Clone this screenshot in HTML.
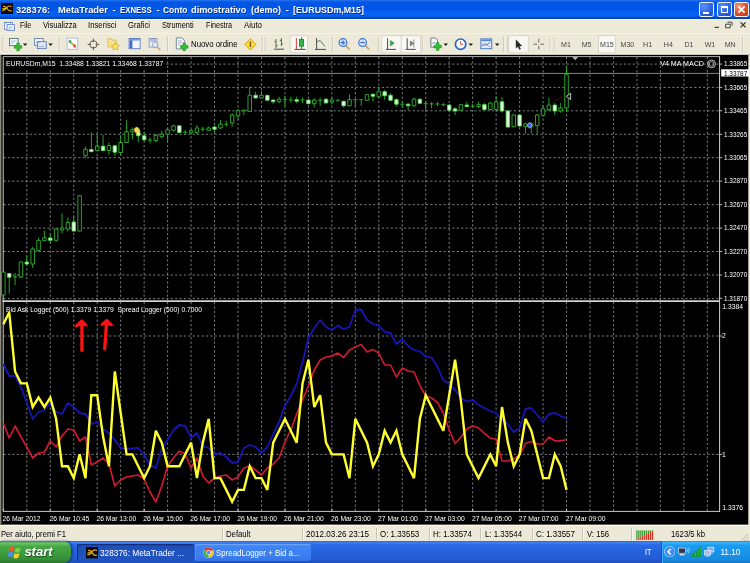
<!DOCTYPE html>
<html lang="it"><head><meta charset="utf-8"><title>328376: MetaTrader - EXNESS</title>
<style>
html,body{margin:0;padding:0}
body{width:750px;height:563px;overflow:hidden;position:relative;background:#ece9d8;font-family:"Liberation Sans",sans-serif;}
#title{position:absolute;left:0;top:0;width:750px;height:18.6px;background:linear-gradient(to bottom,#2a74ee 0%,#0c60ea 7%,#0055e5 16%,#0256e6 50%,#0763f2 72%,#0560ee 84%,#0349c8 93%,#003aa6 100%);}
#title .ticon{position:absolute;left:1.4px;top:3.4px}
#title .ttext{position:absolute;left:0;top:4px;color:#fff;font-weight:bold;font-size:9.6px;line-height:12px;white-space:nowrap;text-shadow:0.6px 0.6px 0 #0a2a8a}
#title .ttext span{position:absolute;top:0;transform-origin:0 50%;white-space:nowrap}
.wb{position:absolute;top:1.5px;width:15.4px;height:15.3px;border-radius:2.4px;border:0.8px solid rgba(255,255,255,.9);box-sizing:border-box;background:radial-gradient(circle at 30% 25%,#5c93f8,#2b5fe0 60%,#1c47c4)}
.wb.min{left:699px}.wb.max{left:716.6px}.wb.cls{left:733.6px;background:radial-gradient(circle at 30% 25%,#f09a7c,#dc4f2c 55%,#b8321c)}
.wb.min i{position:absolute;left:3.2px;top:9.2px;width:5.4px;height:2px;background:#fff}
.wb.max i{position:absolute;left:3px;top:3px;width:7.8px;height:7.4px;border:1px solid #fff;border-top-width:2px;box-sizing:border-box}
.wb.cls svg{position:absolute;left:-0.5px;top:-0.6px}
#menu{position:absolute;left:0;top:18.5px;width:750px;height:14.7px;background:#eeead9;box-shadow:inset 0 1.1px 0 #f2f5ff}
#menu .micon{position:absolute;left:3.6px;top:2.6px}
#menu span{position:absolute;top:2.9px;font-size:8.2px;line-height:10px;color:#000;white-space:nowrap;transform-origin:0 50%}
#menu .mdi{position:absolute}
#status{position:absolute;left:0;top:524.6px;width:750px;height:16.2px;background:#ece9d8;border-top:0.8px solid #fff;box-sizing:border-box}
#status span{position:absolute;top:4.9px;font-size:8.2px;line-height:10px;color:#000;white-space:nowrap;transform-origin:0 50%}
#status i{position:absolute;top:2.2px;width:0.8px;height:12px;background:#c6c3b2;box-shadow:0.8px 0 0 #fbfaf5}
#task{position:absolute;left:0;top:540.8px;width:750px;height:22.2px;background:linear-gradient(to bottom,#2a62d8 0%,#3f7ff4 8%,#2b69e6 18%,#2561dc 50%,#235cd4 80%,#1d4fbc 100%)}
#start{position:absolute;left:0;top:0;width:70.6px;height:22.2px;border-radius:0 8px 8px 0;background:linear-gradient(to bottom,#3a8a3a 0%,#6cc26a 10%,#45a845 25%,#3a9a3c 60%,#338c36 85%,#2a742c 100%);box-shadow:1.6px 0 2.4px rgba(10,40,120,.7)}
#start span{position:absolute;left:24.4px;top:3.2px;color:#fff;font-style:italic;font-weight:bold;font-size:13.2px;line-height:15px;text-shadow:0.8px 0.8px 1px #1a4a1a;letter-spacing:-0.1px}
.tb{position:absolute;top:2.8px;height:17.4px;border-radius:2px;background:linear-gradient(to bottom,#5a98fa 0%,#3f84f4 15%,#3a7ef0 70%,#3475e6 100%);box-shadow:inset 0.6px 0.6px 0 rgba(255,255,255,.25)}
.tb.act{background:linear-gradient(to bottom,#1b44a6 0%,#1f50ba 20%,#2154c0 100%);box-shadow:inset 0.8px 0.8px 1px rgba(0,0,40,.5)}
.tb span{position:absolute;top:4.4px;color:#fff;font-size:8.7px;line-height:10px;white-space:nowrap;transform-origin:0 50%}
#task .lang{position:absolute;left:645.2px;top:7.1px;color:#fff;font-size:8.2px;line-height:10px;transform-origin:0 50%;transform:scaleX(0.88)}
#tray{position:absolute;left:661px;top:0;width:89px;height:22.2px;background:linear-gradient(to bottom,#1a8ee6 0%,#3ab4fa 8%,#1c9cf0 20%,#1793ea 55%,#158ae0 85%,#1276c4 100%);border-left:0.8px solid #1458b8;box-shadow:inset 1px 0 0 #3aa8f4}
#tray .chev{position:absolute;left:1.8px;top:5.2px;width:11.4px;height:11.4px}
#tray .chev svg{display:block}
#tray .clock{position:absolute;left:58.4px;top:7.1px;color:#fff;font-size:8.2px;line-height:10px}

#wrap{position:absolute;left:0;top:0;width:750px;height:563px;overflow:hidden;filter:blur(0.35px)}

.f1{transform:scaleX(0.848)}
.f2{transform:scaleX(0.915)}
.f3{transform:scaleX(0.946)}
.f4{transform:scaleX(0.930)}
.f5{transform:scaleX(0.902)}
.f6{transform:scaleX(0.879)}
.f7{transform:scaleX(0.964)}
.f8{transform:scaleX(0.934)}
.f9{transform:scaleX(0.944)}
.f10{transform:scaleX(0.988)}
.f11{transform:scaleX(0.968)}
.f12{transform:scaleX(0.973)}
.f13{transform:scaleX(0.956)}
.f14{transform:scaleX(0.973)}
.f15{transform:scaleX(0.941)}
.f16{transform:scaleX(0.945)}
.f17{transform:scaleX(0.954)}
.f18{transform:scaleX(0.907)}
</style></head><body><div id="wrap">
<div id="title">
  <svg class="ticon" width="12" height="11" viewBox="0 0 12 11"><rect width="12" height="11" fill="#0a0a0a"/><path d="M1.2 7.6C3 7.8 4.6 6.4 5.8 4.6C6.8 3.2 8.6 2.6 10.6 3.4M2 3.4C4 3 5.4 4.2 6.4 6C7.2 7.4 9 8.2 10.8 7.6M1.4 5.6H4.6" stroke="#e8b21c" stroke-width="1.1" fill="none"/></svg>
  <div class="ttext"><span style="left:16.3px;transform:scaleX(0.971)">328376:</span><span style="left:57.6px;transform:scaleX(0.975)">MetaTrader</span><span style="left:112.6px;transform:scaleX(1.000)">-</span><span style="left:120.2px;transform:scaleX(0.814)">EXNESS</span><span style="left:156.4px;transform:scaleX(1.000)">-</span><span style="left:162.8px;transform:scaleX(0.884)">Conto</span><span style="left:191.3px;transform:scaleX(0.960)">dimostrativo</span><span style="left:251.4px;transform:scaleX(0.935)">(demo)</span><span style="left:285.8px;transform:scaleX(1.000)">-</span><span style="left:292.7px;transform:scaleX(0.924)">[EURUSDm,M15]</span></div>
  <div class="wb min"><i></i></div>
  <div class="wb max"><i></i></div>
  <div class="wb cls"><svg width="15" height="15" viewBox="0 0 15 15"><path d="M4.4 4.4L10.6 10.6M10.6 4.4L4.4 10.6" stroke="#fff" stroke-width="1.7"/></svg></div>
</div>
<div id="menu">
  <svg class="micon" width="11" height="10" viewBox="0 0 11 10"><rect x="0.5" y="1.5" width="8" height="7" fill="#fff" stroke="#6f8fd0" stroke-width="0.9"/><rect x="3" y="3.6" width="7.4" height="5.8" fill="#f4f8ff" stroke="#5f86d8" stroke-width="0.9"/><path d="M4.4 6.2h4.6M4.4 7.8h3" stroke="#8aa6e0" stroke-width="0.7"/><path d="M2 0.6v2M6.6 0.6v2" stroke="#5f86d8" stroke-width="0.8"/></svg>
  <span class="f1" style="left:19.7px">File</span>
  <span class="f2" style="left:42.7px">Visualizza</span>
  <span class="f3" style="left:88.0px">Inserisci</span>
  <span class="f4" style="left:128.0px">Grafici</span>
  <span class="f5" style="left:162.0px">Strumenti</span>
  <span class="f6" style="left:206.0px">Finestra</span>
  <span class="f7" style="left:244.0px">Aiuto</span>
  <svg class="mdi" width="36" height="10" viewBox="0 0 36 10" style="left:712px;top:1.7px"><path d="M2.6 7.4h4.4" stroke="#444" stroke-width="1.3"/><path d="M15.4 2.2h4.6v3.4M13.6 4.2h4.6v3.6h-4.6z" stroke="#444" stroke-width="1" fill="none"/><path d="M28.6 2.4l5 5M33.6 2.4l-5 5" stroke="#333" stroke-width="1.3"/></svg>
</div>

<svg id="tbar" width="750" height="22" viewBox="0 0 750 22" style="position:absolute;left:0;top:33px">
<rect width="750" height="22" fill="#ece9d8"/>
<rect y="0" width="750" height="0.8" fill="#f8f7f0"/>
<rect y="20.5" width="750" height="1" fill="#f6f5ee"/>
<rect y="21.5" width="750" height="0.5" fill="#9a988c"/>
<!-- grips -->
<g stroke="#b4b1a0" stroke-width="1" stroke-dasharray="0.9 1.1">
<path d="M2.2 4.5v13M265.2 4.5v13M507.6 4.5v13M554 4.5v13"/>
</g>
<!-- separators -->
<g stroke="#c2bfae" stroke-width="0.9"><path d="M59.3 3.5v15M167.6 3.5v15M262.3 3.5v15M332.4 3.5v15M378.4 3.5v15M422.6 3.5v15M503.6 3.5v15M550 3.5v15M742.6 3.5v15"/></g>
<g stroke="#fbfaf4" stroke-width="0.7"><path d="M60.1 3.5v15M168.4 3.5v15M263.1 3.5v15M333.2 3.5v15M379.2 3.5v15M423.4 3.5v15M504.4 3.5v15M550.8 3.5v15M743.4 3.5v15"/></g>
<!-- pressed buttons -->
<g fill="#f8f7f2" stroke="#cfcdc0" stroke-width="0.7">
<rect x="290.2" y="2.8" width="17.4" height="17"/>
<rect x="381.8" y="2.8" width="19.4" height="17"/>
<rect x="401.2" y="2.8" width="19.4" height="17"/>
<rect x="508.8" y="2.8" width="19.4" height="17"/>
<rect x="598.6" y="2.8" width="16.6" height="17"/>
</g>
<!-- dropdown arrows -->
<g fill="#1a1a1a"><path d="M22.9 10.6h4.4l-2.2 2.4zM48.4 10.6h4.4l-2.2 2.4zM443.6 10.6h4.4l-2.2 2.4zM468.6 10.6h4.4l-2.2 2.4zM495 10.6h4.4l-2.2 2.4z"/></g>
<!-- 1 new chart -->
<g transform="translate(9,5)"><rect x="0.5" y="0.5" width="8.6" height="7.2" fill="#f4f8fc" stroke="#4f7a68" stroke-width="0.9"/><path d="M1.8 3h5.8M1.8 5h3" stroke="#9ab0c8" stroke-width="0.7"/><path d="M5.4 7.7h2.4V5.2h2.6v2.5h2.4v2.6h-2.4v2.5H7.8v-2.5H5.4z" fill="#2fc22f" stroke="#178a1c" stroke-width="0.6"/></g>
<!-- 2 profiles -->
<g transform="translate(34,5)"><rect x="0.5" y="0.5" width="8.8" height="7" fill="#eef3fa" stroke="#6a84b8" stroke-width="0.9"/><rect x="3.4" y="3.6" width="8.8" height="7" fill="#dfe8f6" stroke="#5f7cb4" stroke-width="0.9"/><path d="M1.8 4.6h4M4.8 8.6h5" stroke="#7c92c0" stroke-width="0.7"/></g>
<!-- 3 market watch -->
<g transform="translate(66.6,4.6)"><rect x="0.5" y="0.5" width="10.6" height="11.2" fill="#fdfdff" stroke="#a8b8e0" stroke-width="0.9"/><path d="M2.6 3.2l3.2 3.2" stroke="#2aa83a" stroke-width="1.7"/><path d="M2.2 2.6h2.8l-2.8 2.8z" fill="#2aa83a"/><path d="M5.6 6l3 3" stroke="#e0442c" stroke-width="1.7"/><path d="M9.4 9.8H6.6l2.8-2.8z" fill="#e0442c"/><path d="M4.6 5.2l2 2" stroke="#e8c030" stroke-width="1.4"/></g>
<!-- 4 crosshair circle -->
<g transform="translate(93.4,11.4)" fill="none" stroke="#5a5040" stroke-width="0.9"><circle r="3.7"/><path d="M0 -5.8v3.6M0 5.8v-3.6M-5.8 0h3.6M5.8 0h-3.6"/></g>
<!-- 5 navigator folder star -->
<g transform="translate(107.4,5)"><path d="M0.5 2.2V0.8h3.6l1 1.4h3.8v6.8H0.5z" fill="#f8e490" stroke="#d8b448" stroke-width="0.8"/><path d="M8 4.4l1.2 2.6 2.8 0.3-2.1 1.9 0.6 2.8L8 10.6 5.5 12l0.6-2.8L4 7.3l2.8-0.3z" fill="#ffe868" stroke="#d0a018" stroke-width="0.7"/></g>
<!-- 6 terminal -->
<g transform="translate(128.6,5)"><rect x="0.5" y="0.5" width="11" height="10.2" fill="#f4f8ff" stroke="#5878c0" stroke-width="0.9"/><rect x="1" y="1" width="2.8" height="9.2" fill="#3f6cd0"/><rect x="1" y="1" width="10" height="1.6" fill="#7d9ce0"/></g>
<!-- 7 tester -->
<g transform="translate(148.6,4.6)"><rect x="0.5" y="1" width="7.8" height="8.4" fill="#e8eef8" stroke="#8a9cc4" stroke-width="0.9"/><path d="M2.4 0.4v4M4.4 0.4v4M6.4 0.4v4" stroke="#6a7ca8" stroke-width="0.8"/><circle cx="6.6" cy="7.2" r="2.8" fill="#dfeafc" fill-opacity="0.8" stroke="#8898b8" stroke-width="0.8"/><path d="M8.6 9.4l3 3" stroke="#c8a050" stroke-width="1.3"/></g>
<!-- 8 new order -->
<g transform="translate(175.8,4.4)"><path d="M0.5 0.5h5.6l2.4 2.4v8.6H0.5z" fill="#fafcff" stroke="#6a7a90" stroke-width="0.9"/><path d="M1.8 3.4h4M1.8 5.4h5M1.8 7.4h3" stroke="#8a98b0" stroke-width="0.7"/><path d="M4.8 8.2h2.4V5.8h2.6v2.4h2.4v2.6H9.8v2.4H7.2v-2.4H4.8z" fill="#2fc22f" stroke="#178a1c" stroke-width="0.6"/></g>
<text x="191" y="14.3" font-family="Liberation Sans, sans-serif" font-size="8.2" fill="#000" textLength="46.5" lengthAdjust="spacingAndGlyphs">Nuovo ordine</text>
<!-- 9 yellow diamond -->
<g transform="translate(250.4,11.4)"><path d="M0 -5.6L5.6 0L0 5.6L-5.6 0z" fill="#ffdc3a" stroke="#c89a18" stroke-width="0.9"/><circle cx="0" cy="-1.6" r="1" fill="#6a4a10"/><path d="M0 -0.4v3" stroke="#6a4a10" stroke-width="1.3"/></g>
<!-- 10 bar chart -->
<g fill="none" stroke="#3a6a3a" stroke-width="0.9"><path d="M276 6v9M276 8.6h-1.6M276 12.6h1.6M281.4 5v8M281.4 7.4h-1.6M281.4 11h1.6"/></g>
<path d="M274 16.2h10" stroke="#4a4a4a" stroke-width="1"/>
<!-- 11 candle -->
<path d="M296.4 5v11" stroke="#c03030" stroke-width="0.9"/>
<path d="M301.6 4v12.4" stroke="#1a7a2a" stroke-width="0.9"/>
<rect x="299.6" y="6.4" width="4" height="6.8" fill="#2fb84a" stroke="#156a22" stroke-width="0.7"/>
<path d="M294.6 16.4h11" stroke="#4a4a4a" stroke-width="1"/>
<!-- 12 line -->
<path d="M316.6 5v11.4M315 16.4h11" stroke="#4a4a4a" stroke-width="1" fill="none"/>
<path d="M316.6 9.2l3.4-1.8 4.8 6" stroke="#3a7a3a" stroke-width="0.9" fill="none"/>
<!-- 13 zoom in/out -->
<g transform="translate(343,9.6)"><circle r="3.9" fill="#cfe4fc" stroke="#3f74d0" stroke-width="1.2"/><path d="M-2.2 0h4.4M0 -2.2v4.4" stroke="#2f60c0" stroke-width="1.1"/><path d="M2.9 3l3.6 3.8" stroke="#c8a45c" stroke-width="1.7"/></g>
<g transform="translate(362.6,9.6)"><circle r="3.9" fill="#cfe4fc" stroke="#3f74d0" stroke-width="1.2"/><path d="M-2.2 0h4.4" stroke="#2f60c0" stroke-width="1.1"/><path d="M2.9 3l3.6 3.8" stroke="#c8a45c" stroke-width="1.7"/></g>
<!-- 14 autoscroll / shift -->
<path d="M387.6 5.4v11M386 16.4h10" stroke="#4a4a4a" stroke-width="1" fill="none"/>
<path d="M390.4 7.6l3.8 2.6-3.8 2.6z" fill="#3cb048" stroke="#1f7a2a" stroke-width="0.6"/>
<path d="M407.2 5.4v11M405.6 16.4h10" stroke="#4a4a4a" stroke-width="1" fill="none"/>
<path d="M410.4 8l3.4 2.4-3.4 2.4z" fill="#8a8a8a" stroke="#5a5a5a" stroke-width="0.6"/>
<path d="M413.8 6.4v8" stroke="#6a6a6a" stroke-width="0.7"/>
<!-- 15 indicators -->
<g transform="translate(430.4,4.6)"><path d="M0.5 0.5h4.6l2 2v7H0.5z" fill="#fafcff" stroke="#5a6a7a" stroke-width="0.9"/><path d="M2 6.6c1-2.4 2-2.4 3.2 0" stroke="#4a5a9a" stroke-width="0.7" fill="none"/><path d="M3.6 7.6H6V5.2h2.6v2.4H11v2.6H8.6v2.4H6v-2.4H3.6z" fill="#2fc22f" stroke="#178a1c" stroke-width="0.6"/></g>
<!-- 16 clock -->
<g transform="translate(460.6,11.2)"><circle r="5.2" fill="#f6f9ff" stroke="#2f64c8" stroke-width="1.7"/><path d="M0 -3v3.2h2.6" stroke="#c05020" stroke-width="0.9" fill="none"/></g>
<!-- 17 templates -->
<g transform="translate(480.4,5.4)"><rect x="0.5" y="0.5" width="10.8" height="9.8" fill="#e4effc" stroke="#4c78c0" stroke-width="1"/><rect x="1" y="1" width="9.8" height="1.8" fill="#5c88d4"/><path d="M1.6 7.6l3-2.4 2 1.2 3.4-2.6" stroke="#3a5a9a" stroke-width="0.8" fill="none"/><path d="M1.6 5l3 2.6 2-1 3.4 2" stroke="#7a9ad0" stroke-width="0.7" fill="none"/></g>
<!-- 18 cursor -->
<path d="M516 6.8v8.4l1.9-1.8 1.5 3.1 1.3-0.6-1.5-3h2.7z" fill="#2a2a2a" stroke="#111" stroke-width="0.3"/>
<!-- 19 crosshair -->
<path d="M538.8 5.8v3.8M538.8 12.8v3.8M533.4 11.2h3.8M540.4 11.2h3.8" stroke="#5a5a5a" stroke-width="0.9" fill="none"/>
<!-- periods -->
<g font-family="Liberation Sans, sans-serif" font-size="7.1" fill="#484848" text-anchor="middle">
<text x="566" y="14">M1</text><text x="586.6" y="14">M5</text><text x="606.9" y="14">M15</text><text x="627.4" y="14">M30</text><text x="647.6" y="14">H1</text><text x="668.4" y="14">H4</text><text x="689" y="14">D1</text><text x="710" y="14">W1</text><text x="730.2" y="14">MN</text>
</g>
</svg>

<svg width="750" height="470" viewBox="0 0 750 470" style="position:absolute;left:0;top:55px;display:block">
<rect x="0" y="0" width="750" height="470" fill="#ece9d8"/>
<rect x="0" y="0" width="748.3" height="469.6" fill="#000"/>
<rect x="0" y="0" width="1" height="469.6" fill="#8c8a7c"/>
<rect x="1" y="0.6" width="0.9" height="469.0" fill="#3c3b36"/>
<path d="M26.82 2.0V245.2M26.82 247.0V456.0M50.28 2.0V245.2M50.28 247.0V456.0M73.75 2.0V245.2M73.75 247.0V456.0M97.21 2.0V245.2M97.21 247.0V456.0M120.68 2.0V245.2M120.68 247.0V456.0M144.15 2.0V245.2M144.15 247.0V456.0M167.61 2.0V245.2M167.61 247.0V456.0M191.08 2.0V245.2M191.08 247.0V456.0M214.54 2.0V245.2M214.54 247.0V456.0M238.01 2.0V245.2M238.01 247.0V456.0M261.48 2.0V245.2M261.48 247.0V456.0M284.94 2.0V245.2M284.94 247.0V456.0M308.41 2.0V245.2M308.41 247.0V456.0M331.87 2.0V245.2M331.87 247.0V456.0M355.34 2.0V245.2M355.34 247.0V456.0M378.81 2.0V245.2M378.81 247.0V456.0M402.27 2.0V245.2M402.27 247.0V456.0M425.74 2.0V245.2M425.74 247.0V456.0M449.20 2.0V245.2M449.20 247.0V456.0M472.67 2.0V245.2M472.67 247.0V456.0M496.14 2.0V245.2M496.14 247.0V456.0M519.60 2.0V245.2M519.60 247.0V456.0M543.07 2.0V245.2M543.07 247.0V456.0M566.53 2.0V245.2M566.53 247.0V456.0M590.00 2.0V245.2M590.00 247.0V456.0M613.47 2.0V245.2M613.47 247.0V456.0M636.93 2.0V245.2M636.93 247.0V456.0M660.40 2.0V245.2M660.40 247.0V456.0M683.86 2.0V245.2M683.86 247.0V456.0M707.33 2.0V245.2M707.33 247.0V456.0M3.5 9.1H719.5M3.5 32.4H719.5M3.5 55.8H719.5M3.5 79.3H719.5M3.5 102.7H719.5M3.5 126.2H719.5M3.5 149.6H719.5M3.5 173.1H719.5M3.5 196.5H719.5M3.5 220.0H719.5M3.5 243.6H719.5M3.5 281.0H719.5M3.5 399.4H719.5" stroke="#9ca0a4" stroke-width="0.78" stroke-dasharray="2.2 2.2" fill="none"/>
<path d="M3.2 1.6H719.6" stroke="#d8d8d8" stroke-width="0.8" fill="none"/>
<path d="M3.2 1.6V456.4" stroke="#e8e8e8" stroke-width="0.9" fill="none"/>
<path d="M719.6 1.2V456.6" stroke="#e8e8e8" stroke-width="0.9" fill="none"/>
<path d="M3.2 456.4H720" stroke="#e0e0e0" stroke-width="0.9" fill="none"/>
<path d="M2.5 246.1H720" stroke="#cfcfcf" stroke-width="1.8" fill="none"/>
<path d="M3.5 18.4H719.5" stroke="#a9a9a9" stroke-width="0.8" fill="none"/>
<path d="M719.6 9.1h2.6M719.6 32.4h2.6M719.6 55.8h2.6M719.6 79.3h2.6M719.6 102.7h2.6M719.6 126.2h2.6M719.6 149.6h2.6M719.6 173.1h2.6M719.6 196.5h2.6M719.6 220.0h2.6M719.6 243.2h2.6M719.6 281.0h2.6M719.6 399.4h2.6" stroke="#e0e0e0" stroke-width="0.8" fill="none"/>
<path d="M3.35 453.6V456.4M50.28 453.6V456.4M97.21 453.6V456.4M144.15 453.6V456.4M191.08 453.6V456.4M238.01 453.6V456.4M284.94 453.6V456.4M331.87 453.6V456.4M378.81 453.6V456.4M425.74 453.6V456.4M472.67 453.6V456.4M519.60 453.6V456.4M566.53 453.6V456.4" stroke="#e0e0e0" stroke-width="0.8" fill="none"/>
<path d="M572.2 2.0h6l-3 3.2z" fill="#b0b0b0"/>
<rect x="4.2" y="3.6" width="161" height="10.4" fill="#000"/>
<path d="M3.35 217.0V240.4M9.22 218.0V238.4M15.08 218.0V230.0M13.03 222.0h4.1M20.95 206.5V223.0M26.82 201.0V210.0M32.68 191.8V213.0M38.55 182.7V196.8M44.42 175.6V186.0M50.28 178.6V187.7M56.15 173.5V186.7M62.02 158.3V178.6M67.88 162.4V176.6M73.75 161.4V177.0M79.61 140.0V176.6M85.48 91.7V102.5M91.35 77.5V96.7M97.21 80.0V95.8M103.08 80.0V95.8M108.95 87.5V99.7M114.81 90.0V100.8M120.68 80.0V100.0M126.55 65.0V87.8M132.41 72.5V84.2M138.28 75.0V87.5M144.15 76.7V86.7M150.01 82.5V88.3M147.96 85.0h4.1M155.88 79.2V87.5M161.75 75.8V83.3M167.61 72.5V86.7M173.48 70.0V76.3M179.34 70.0V78.3M185.21 75.0V80.0M183.16 77.2h4.1M191.08 74.2V79.7M196.94 70.0V79.2M202.81 71.7V76.7M200.76 74.2h4.1M208.68 71.7V75.8M214.54 70.8V77.5M220.41 65.0V73.7M226.28 65.8V71.7M224.23 69.2h4.1M232.14 58.3V71.7M238.01 54.2V65.0M243.88 54.2V60.0M241.83 55.8h4.1M249.74 31.7V56.7M255.61 36.7V43.3M261.48 35.8V43.3M267.34 40.0V45.8M273.21 44.7V49.2M279.08 41.7V48.3M284.94 40.8V51.7M282.89 44.7h4.1M290.81 41.7V47.5M288.76 45.0h4.1M296.68 41.7V48.3M302.54 42.5V48.3M300.49 45.0h4.1M308.41 44.7V49.2M314.27 43.3V52.5M320.14 42.5V50.8M318.09 45.3h4.1M326.01 43.3V48.3M331.87 42.5V49.2M337.74 44.2V46.7M335.69 45.3h4.1M343.61 45.8V52.5M349.47 39.2V51.2M355.34 44.7V51.7M353.29 44.7h4.1M361.21 44.7V50.8M359.16 44.7h4.1M367.07 39.2V45.8M372.94 38.7V46.7M378.81 32.5V42.5M384.67 35.0V45.0M390.54 38.3V45.8M396.41 43.3V51.7M402.27 45.8V52.5M400.22 49.2h4.1M408.14 48.0V55.0M414.01 42.5V51.7M419.87 43.3V49.2M425.74 45.8V55.0M423.69 48.7h4.1M431.60 46.8V53.4M429.55 48.9h4.1M437.47 46.8V51.2M435.42 49.0h4.1M443.34 48.0V51.6M441.29 49.7h4.1M449.20 49.0V56.0M455.07 52.3V60.0M460.94 49.0V56.7M466.80 46.8V52.3M472.67 49.0V53.0M470.62 51.2h4.1M478.54 46.8V53.4M484.40 48.0V55.6M490.27 46.8V55.2M496.14 41.3V55.6M502.00 42.0V57.4M507.87 55.5V72.5M513.74 59.5V72.2M519.60 58.9V71.7M525.47 67.7V78.7M531.34 67.7V78.7M537.20 58.9V78.7M543.07 50.1V61.1M548.93 42.4V56.0M554.80 48.0V60.0M560.67 48.0V57.8M566.53 10.5V56.7" stroke="#2bbf2b" stroke-width="0.85" fill="none"/>
<path d="M1.60 217.0h3.5V240.0h-3.5zM19.20 207.0h3.5V222.0h-3.5zM30.93 194.0h3.5V209.0h-3.5zM36.80 185.3h3.5V195.4h-3.5zM42.67 182.7h3.5V185.7h-3.5zM54.40 174.0h3.5V185.3h-3.5zM60.27 173.0h3.5V175.0h-3.5zM66.13 167.5h3.5V174.0h-3.5zM77.86 140.7h3.5V176.0h-3.5zM83.73 94.2h3.5V100.8h-3.5zM95.46 91.2h3.5V95.5h-3.5zM107.20 90.5h3.5V95.5h-3.5zM118.93 87.5h3.5V97.5h-3.5zM124.80 76.7h3.5V87.5h-3.5zM130.66 74.7h3.5V76.7h-3.5zM154.13 80.3h3.5V85.5h-3.5zM160.00 79.2h3.5V81.7h-3.5zM165.86 74.7h3.5V79.2h-3.5zM171.73 70.8h3.5V75.3h-3.5zM189.33 75.8h3.5V77.8h-3.5zM195.19 73.0h3.5V77.5h-3.5zM206.93 73.0h3.5V75.3h-3.5zM218.66 69.2h3.5V73.0h-3.5zM230.39 60.0h3.5V68.0h-3.5zM236.26 55.8h3.5V60.8h-3.5zM247.99 40.3h3.5V56.3h-3.5zM259.73 40.3h3.5V43.0h-3.5zM277.33 44.2h3.5V46.7h-3.5zM312.52 45.0h3.5V48.7h-3.5zM330.12 45.0h3.5V47.0h-3.5zM347.72 44.7h3.5V50.8h-3.5zM365.32 39.7h3.5V45.3h-3.5zM377.06 36.7h3.5V41.7h-3.5zM412.26 44.2h3.5V50.8h-3.5zM459.19 49.7h3.5V55.2h-3.5zM476.79 49.7h3.5V51.6h-3.5zM488.52 48.0h3.5V54.5h-3.5zM494.39 46.8h3.5V54.5h-3.5zM511.99 60.0h3.5V71.7h-3.5zM523.72 68.8h3.5V71.7h-3.5zM529.59 68.8h3.5V71.7h-3.5zM535.45 60.0h3.5V70.6h-3.5zM541.32 53.8h3.5V60.4h-3.5zM547.18 50.1h3.5V54.5h-3.5zM558.92 53.0h3.5V56.0h-3.5zM564.78 19.3h3.5V53.0h-3.5z" stroke="#30bf30" stroke-width="0.85" fill="#000"/>
<path d="M7.47 218.5h3.5V222.2h-3.5zM25.07 207.0h3.5V209.0h-3.5zM48.53 183.0h3.5V185.3h-3.5zM72.00 167.0h3.5V176.0h-3.5zM89.60 94.5h3.5V96.7h-3.5zM101.33 91.2h3.5V95.5h-3.5zM113.06 90.8h3.5V97.2h-3.5zM136.53 75.8h3.5V80.8h-3.5zM142.40 80.8h3.5V84.7h-3.5zM177.59 70.8h3.5V77.5h-3.5zM212.79 72.0h3.5V74.2h-3.5zM253.86 40.3h3.5V43.0h-3.5zM265.59 40.3h3.5V45.3h-3.5zM271.46 45.0h3.5V46.7h-3.5zM294.93 44.7h3.5V46.3h-3.5zM306.66 45.0h3.5V48.7h-3.5zM324.26 44.2h3.5V48.0h-3.5zM341.86 46.3h3.5V50.8h-3.5zM371.19 39.2h3.5V41.3h-3.5zM382.92 36.7h3.5V40.8h-3.5zM388.79 40.3h3.5V45.3h-3.5zM394.66 44.7h3.5V49.2h-3.5zM406.39 49.2h3.5V50.8h-3.5zM418.12 44.2h3.5V48.3h-3.5zM447.45 50.1h3.5V55.2h-3.5zM453.32 53.8h3.5V56.0h-3.5zM465.05 50.0h3.5V51.6h-3.5zM482.65 49.7h3.5V54.5h-3.5zM500.25 46.8h3.5V56.0h-3.5zM506.12 56.0h3.5V72.1h-3.5zM517.85 60.0h3.5V71.0h-3.5zM553.05 50.1h3.5V56.0h-3.5z" stroke="#4fdc4f" stroke-width="0.85" fill="#e4ffe0"/>
<ellipse cx="136.9" cy="75.1" rx="2.5" ry="3" fill="#f2da56" stroke="#e0b030" stroke-width="0.4" transform="rotate(-25 136.9 75.1)"/>
<path d="M529.6 67.3l2.6 3 -2.6 3 -2.6 -3z" fill="#3a5cff" stroke="#d8e0ff" stroke-width="0.7"/>
<path d="M570.6 38.2v6.4l-4.2 -3.2z" fill="#000" stroke="#f4f4f4" stroke-width="0.8"/>
<path d="M553.7 46.8L563.8 41.0" stroke="#b01818" stroke-width="0.7" stroke-dasharray="1 1.2" fill="none"/>
<polyline points="3.35,309.0 9.22,321.0 15.08,321.0 20.95,332.0 26.82,348.0 32.68,364.0 38.55,357.0 44.42,355.0 50.28,348.0 56.15,357.0 62.02,359.0 67.88,348.0 73.75,352.0 79.61,358.0 85.48,359.0 91.35,369.0 97.21,367.0 103.08,374.0 108.95,378.0 114.81,385.0 120.68,393.0 126.55,394.0 132.41,393.5 138.28,393.0 144.15,400.0 150.01,410.0 155.88,413.0 161.75,394.0 167.61,385.0 173.48,375.0 179.34,370.0 185.21,371.0 191.08,383.0 196.94,378.0 202.81,391.0 208.68,393.0 214.54,399.0 220.41,398.0 226.28,402.0 232.14,408.0 238.01,407.0 243.88,393.0 249.74,390.0 255.61,392.0 261.48,398.0 267.34,392.0 273.21,379.0 279.08,367.0 284.94,350.5 290.81,341.0 296.68,329.0 302.54,307.0 308.41,283.0 314.27,273.0 320.14,265.0 326.01,272.0 331.87,275.0 337.74,270.6 343.61,274.0 349.47,272.0 355.34,255.0 361.21,254.5 367.07,265.0 372.94,269.0 378.81,270.6 384.67,277.0 390.54,278.0 396.41,289.0 402.27,284.0 408.14,291.0 414.01,295.0 419.87,296.5 425.74,301.7 431.60,302.7 437.47,312.0 443.34,325.0 449.20,329.0 455.07,335.0 460.94,343.0 466.80,346.5 472.67,345.0 478.54,349.7 484.40,353.0 490.27,356.0 496.14,358.0 502.00,364.6 507.87,369.0 513.74,377.0 519.60,373.0 525.47,354.0 531.34,353.0 537.20,360.0 543.07,367.0 548.93,359.0 554.80,358.0 560.67,361.0 566.53,363.5" stroke="#1616b2" stroke-width="1.8" fill="none" stroke-linejoin="round"/>
<polyline points="3.35,368.0 9.22,383.0 15.08,371.0 20.95,382.0 26.82,392.0 32.68,403.0 38.55,398.0 44.42,397.0 50.28,386.0 56.15,392.0 62.02,381.0 67.88,374.0 73.75,375.0 79.61,386.0 85.48,382.0 91.35,410.0 97.21,407.0 103.08,403.0 108.95,409.0 114.81,431.0 120.68,425.0 126.55,422.0 132.41,421.0 138.28,420.0 144.15,424.0 150.01,437.0 155.88,447.0 161.75,431.0 167.61,411.0 173.48,403.0 179.34,396.0 185.21,399.0 191.08,413.0 196.94,403.0 202.81,421.0 208.68,428.0 214.54,423.0 220.41,421.0 226.28,420.0 232.14,425.0 238.01,422.0 243.88,413.0 249.74,411.0 255.61,415.0 261.48,420.0 267.34,413.0 273.21,409.0 279.08,403.0 284.94,387.0 290.81,375.0 296.68,359.0 302.54,345.0 308.41,331.0 314.27,315.0 320.14,305.0 326.01,302.0 331.87,301.0 337.74,298.0 343.61,302.6 349.47,295.0 355.34,292.0 361.21,289.6 367.07,297.0 372.94,294.6 378.81,298.0 384.67,310.0 390.54,310.0 396.41,322.0 402.27,313.0 408.14,316.0 414.01,317.0 419.87,330.5 425.74,341.0 431.60,343.0 437.47,347.5 443.34,358.0 449.20,375.0 455.07,388.5 460.94,382.0 466.80,374.0 472.67,370.8 478.54,373.0 484.40,378.3 490.27,383.0 496.14,384.2 502.00,406.0 507.87,406.0 513.74,403.7 519.60,400.5 525.47,388.5 531.34,386.5 537.20,389.0 543.07,389.0 548.93,382.0 554.80,385.8 560.67,385.8 566.53,384.7" stroke="#d01a32" stroke-width="1.65" fill="none" stroke-linejoin="round"/>
<polyline points="3.35,269.2 9.22,257.3 15.08,316.5 20.95,328.4 26.82,328.4 32.68,352.0 38.55,342.6 44.42,352.0 50.28,342.6 56.15,363.9 62.02,411.2 67.88,411.2 73.75,423.1 79.61,399.4 85.48,423.1 91.35,340.2 97.21,340.2 103.08,381.6 108.95,411.2 114.81,316.5 120.68,358.0 126.55,399.4 132.41,399.4 138.28,411.2 144.15,423.1 150.01,411.2 155.88,375.7 161.75,387.6 167.61,411.2 173.48,411.2 179.34,411.2 185.21,399.4 191.08,387.6 196.94,423.1 202.81,387.6 208.68,363.9 214.54,423.1 220.41,423.1 226.28,434.9 232.14,446.8 238.01,434.9 243.88,434.9 249.74,411.2 255.61,423.1 261.48,423.1 267.34,434.9 273.21,387.6 279.08,375.7 284.94,363.9 290.81,375.7 296.68,387.6 302.54,328.4 308.41,304.7 314.27,352.0 320.14,340.2 326.01,387.6 331.87,399.4 337.74,399.4 343.61,399.4 349.47,423.1 355.34,363.9 361.21,375.7 367.07,387.6 372.94,411.2 378.81,399.4 384.67,375.7 390.54,387.6 396.41,375.7 402.27,399.4 408.14,411.2 414.01,423.1 419.87,363.9 425.74,340.2 431.60,352.0 437.47,363.9 443.34,375.7 449.20,340.2 455.07,304.7 460.94,346.1 466.80,399.4 472.67,411.2 478.54,423.1 484.40,411.2 490.27,399.4 496.14,411.2 502.00,352.0 507.87,387.6 513.74,411.2 519.60,399.4 525.47,363.9 531.34,375.7 537.20,399.4 543.07,423.1 548.93,423.1 554.80,399.4 560.67,411.2 566.53,434.9" stroke="#ffff30" stroke-width="2.4" fill="none" stroke-linejoin="miter" stroke-miterlimit="3"/>
<path d="M81.9 295.4L81.9 266.3" stroke="#f81414" stroke-width="3.3" stroke-linecap="round" fill="none"/>
<path d="M75.6 271.2L81.9 265.5L86.4 270.4L82.10000000000001 269.5z" fill="#f81414" stroke="#f81414" stroke-width="2.3" stroke-linejoin="round"/>
<path d="M104.7 293.8L106.7 265.9" stroke="#f81414" stroke-width="3.3" stroke-linecap="round" fill="none"/>
<path d="M101.6 269.6L106.7 265.1L112 270.0L106.9 269.1z" fill="#f81414" stroke="#f81414" stroke-width="2.3" stroke-linejoin="round"/>
<g font-family="Liberation Sans, sans-serif" font-size="6.75" fill="#fff" style="white-space:pre">
<text x="6" y="11.0" font-size="7" textLength="157.2" lengthAdjust="spacingAndGlyphs">EURUSDm,M15&#160;&#160;1.33488 1.33821 1.33468 1.33787</text>
<text x="660.2" y="11.3" font-size="7.1">V4 MA MACD</text>
<text x="6" y="256.8" font-size="7" textLength="196" lengthAdjust="spacingAndGlyphs">Bid Ask Logger (500) 1.3379 1.3379&#160;&#160;Spread Logger (500) 0.7000</text>
<text x="724" y="11.0" font-size="6.45">1.33865</text>
<text x="724" y="34.6" font-size="6.45">1.33665</text>
<text x="724" y="58.0" font-size="6.45">1.33465</text>
<text x="724" y="81.5" font-size="6.45">1.33265</text>
<text x="724" y="104.9" font-size="6.45">1.33065</text>
<text x="724" y="128.4" font-size="6.45">1.32870</text>
<text x="724" y="151.8" font-size="6.45">1.32670</text>
<text x="724" y="175.2" font-size="6.45">1.32470</text>
<text x="724" y="198.7" font-size="6.45">1.32270</text>
<text x="724" y="222.1" font-size="6.45">1.32070</text>
<text x="724" y="245.6" font-size="6.45">1.31870</text>
<text x="722.3" y="254.2">1.3384</text>
<text x="722" y="283.2">2</text>
<text x="722" y="402.0">1</text>
<text x="722.3" y="454.8">1.3376</text>
<text x="2.5" y="466.4">26 Mar 2012</text>
<text x="49.5" y="466.4">26 Mar 10:45</text>
<text x="96.4" y="466.4">26 Mar 13:00</text>
<text x="143.3" y="466.4">26 Mar 15:00</text>
<text x="190.3" y="466.4">26 Mar 17:00</text>
<text x="237.2" y="466.4">26 Mar 19:00</text>
<text x="284.1" y="466.4">26 Mar 21:00</text>
<text x="331.1" y="466.4">26 Mar 23:00</text>
<text x="378.0" y="466.4">27 Mar 01:00</text>
<text x="424.9" y="466.4">27 Mar 03:00</text>
<text x="471.9" y="466.4">27 Mar 05:00</text>
<text x="518.8" y="466.4">27 Mar 07:00</text>
<text x="565.7" y="466.4">27 Mar 09:00</text>
</g>
<rect x="721.2" y="14.3" width="28.8" height="7.2" fill="#fff"/>
<text x="724" y="20.6" font-family="Liberation Sans, sans-serif" font-size="6.45" fill="#000">1.33787</text>
<circle cx="711.6" cy="8.9" r="3.9" fill="none" stroke="#f0f0f0" stroke-width="0.8"/>
<circle cx="711.6" cy="8.9" r="2.3" fill="none" stroke="#e0e0e0" stroke-width="0.7"/>
</svg>
<div id="status">
  <span class="f8" style="left:1.0px">Per aiuto, premi F1</span>
  <i style="left:221.8px"></i><span class="f9" style="left:226.3px">Default</span>
  <i style="left:302.3px"></i><span class="f10" style="left:306.2px">2012.03.26 23:15</span>
  <i style="left:376.2px"></i><span class="f11" style="left:380.2px">O: 1.33553</span>
  <i style="left:428.5px"></i><span class="f12" style="left:433.0px">H: 1.33574</span>
  <i style="left:480px"></i><span class="f13" style="left:484.5px">L: 1.33544</span>
  <i style="left:531.6px"></i><span class="f14" style="left:535.5px">C: 1.33557</span>
  <i style="left:582px"></i><span class="f15" style="left:587.0px">V: 156</span>
  <i style="left:630.6px"></i>
  <svg width="18" height="10.2" viewBox="0 0 18 9" preserveAspectRatio="none" style="position:absolute;left:635.6px;top:4.2px"><rect x="0.30" y="0.4" width="1.25" height="7.40" fill="#2f9a2a"/><rect x="0.30" y="7.80" width="1.25" height="1.20" fill="#d8301c"/><rect x="2.25" y="0.4" width="1.25" height="6.55" fill="#2f9a2a"/><rect x="2.25" y="6.95" width="1.25" height="2.05" fill="#d8301c"/><rect x="4.20" y="0.4" width="1.25" height="5.70" fill="#2f9a2a"/><rect x="4.20" y="6.10" width="1.25" height="2.90" fill="#d8301c"/><rect x="6.15" y="0.4" width="1.25" height="4.85" fill="#2f9a2a"/><rect x="6.15" y="5.25" width="1.25" height="3.75" fill="#d8301c"/><rect x="8.10" y="0.4" width="1.25" height="4.00" fill="#2f9a2a"/><rect x="8.10" y="4.40" width="1.25" height="4.60" fill="#d8301c"/><rect x="10.05" y="0.4" width="1.25" height="3.15" fill="#2f9a2a"/><rect x="10.05" y="3.55" width="1.25" height="5.45" fill="#d8301c"/><rect x="12.00" y="0.4" width="1.25" height="2.30" fill="#2f9a2a"/><rect x="12.00" y="2.70" width="1.25" height="6.30" fill="#d8301c"/><rect x="13.95" y="0.4" width="1.25" height="1.45" fill="#2f9a2a"/><rect x="13.95" y="1.85" width="1.25" height="7.15" fill="#d8301c"/><rect x="15.90" y="0.4" width="1.25" height="0.60" fill="#2f9a2a"/><rect x="15.90" y="1.00" width="1.25" height="8.00" fill="#d8301c"/></svg>
  <span class="f16" style="left:671.0px">1623/5 kb</span>
  <svg width="9" height="9" viewBox="0 0 9 9" style="position:absolute;left:739.6px;top:7.2px"><path d="M8.6 0.8L0.8 8.6M8.6 3.8L3.8 8.6M8.6 6.6L6.6 8.6" stroke="#a8a698" stroke-width="0.9"/><path d="M9.2 1.4L1.4 9.2M9.2 4.4L4.4 9.2" stroke="#fff" stroke-width="0.6"/></svg>
</div>
<div id="task">
  <div id="start">
    <svg width="15.4" height="16" viewBox="-1 0 14 13" preserveAspectRatio="none" style="position:absolute;left:6.6px;top:2.8px"><path d="M1.4 2.6C3 1.4 4.6 1.6 6 2.6L5 6.2C3.6 5.2 2 5.2 0.5 6.2z" fill="#f0582c"/><path d="M7 2.9C8.4 3.8 10 3.8 11.6 2.7L10.6 6.3C9 7.3 7.4 7.3 6 6.4z" fill="#7cd048"/><path d="M0.3 7.2C1.8 6.2 3.4 6.2 4.8 7.2L3.8 10.8C2.4 9.8 0.8 9.8 -0.6 10.8z" fill="#4c90f4"/><path d="M5.8 7.5C7.2 8.4 8.8 8.4 10.4 7.4L9.4 11C7.8 12 6.2 12 4.8 11.1z" fill="#fccc2c"/></svg>
    <span>start</span>
  </div>
  <div class="tb act" style="left:77.4px;width:116.4px">
    <svg width="12.4" height="11.4" viewBox="0 0 12 10" preserveAspectRatio="none" style="position:absolute;left:8.2px;top:3.6px"><rect width="12" height="10" fill="#0a0a0a"/><path d="M1.2 7C3 7.2 4.6 5.8 5.8 4.2C6.8 2.8 8.6 2.2 10.6 3M2 3C4 2.6 5.4 3.8 6.4 5.6C7.2 7 9 7.6 10.8 7M1.4 5.2H4.6" stroke="#e8b21c" stroke-width="1.1" fill="none"/></svg>
    <span class="f17" style="left:22.8px">328376: MetaTrader ...</span>
  </div>
  <div class="tb" style="left:195.2px;width:115.6px">
    <svg width="11" height="11" viewBox="0 0 11 11" style="position:absolute;left:7.8px;top:3.6px"><circle cx="5.5" cy="5.5" r="5.2" fill="#e8eef4"/><path d="M5.5 5.5L1 2.9A5.2 5.2 0 0 1 10 2.9z" fill="#e0382c"/><path d="M5.5 5.5L10 2.9A5.2 5.2 0 0 1 5.5 10.7z" fill="#f4c81c"/><path d="M5.5 5.5L5.5 10.7A5.2 5.2 0 0 1 1 2.9z" fill="#3cac4c"/><circle cx="5.5" cy="5.5" r="2.4" fill="#f4f4f4"/><circle cx="5.5" cy="5.5" r="1.8" fill="#4a8ce8"/></svg>
    <span class="f18" style="left:21.3px">SpreadLogger + Bid a...</span>
  </div>
  <span class="lang">IT</span>
  <div id="tray">
    <div class="chev"><svg width="11.4" height="11.4" viewBox="0 0 11 11"><circle cx="5.5" cy="5.5" r="5.2" fill="#3d8ff4" stroke="#bcdcff" stroke-width="0.7"/><path d="M6.6 2.8L3.8 5.5L6.6 8.2" stroke="#fff" stroke-width="1.4" fill="none"/></svg></div>
    <svg width="12" height="10.6" viewBox="0 0 13 11" style="position:absolute;left:15.6px;top:5.2px"><rect x="0.6" y="2" width="7.6" height="5.6" fill="#2c3854" stroke="#cfd8ea" stroke-width="0.8"/><rect x="2" y="8.4" width="5" height="1.6" fill="#cfd6e2"/><path d="M9.6 2.6c1 1 1 2.6 0 3.6M11 1.4c1.6 1.8 1.6 4.2 0 6" stroke="#e8eef8" stroke-width="0.7" fill="none"/></svg>
    <svg width="11.6" height="11.6" viewBox="0 0 13 12" style="position:absolute;left:28.6px;top:5.2px"><path d="M0.6 11.4V8.6h2.4v2.8zM3.8 11.4V6h2.4v5.4zM7 11.4V3.4h2.4v8zM10.2 11.4V0.6h2.4v10.8z" fill="#28c428" stroke="#0c7a14" stroke-width="0.5"/></svg>
    <svg width="11" height="11.4" viewBox="0 0 13 12" style="position:absolute;left:41.6px;top:5px"><rect x="4.6" y="0.6" width="7" height="5.4" fill="#8aa8e0" stroke="#e6eefc" stroke-width="0.8"/><rect x="0.8" y="4.6" width="7" height="5.4" fill="#a8c0ec" stroke="#eef4ff" stroke-width="0.8"/><path d="M2 11.2h5M7 7.4h4" stroke="#dfe8f8" stroke-width="0.9"/></svg>
    <span class="clock">11.10</span>
  </div>
</div>

</div></body></html>
